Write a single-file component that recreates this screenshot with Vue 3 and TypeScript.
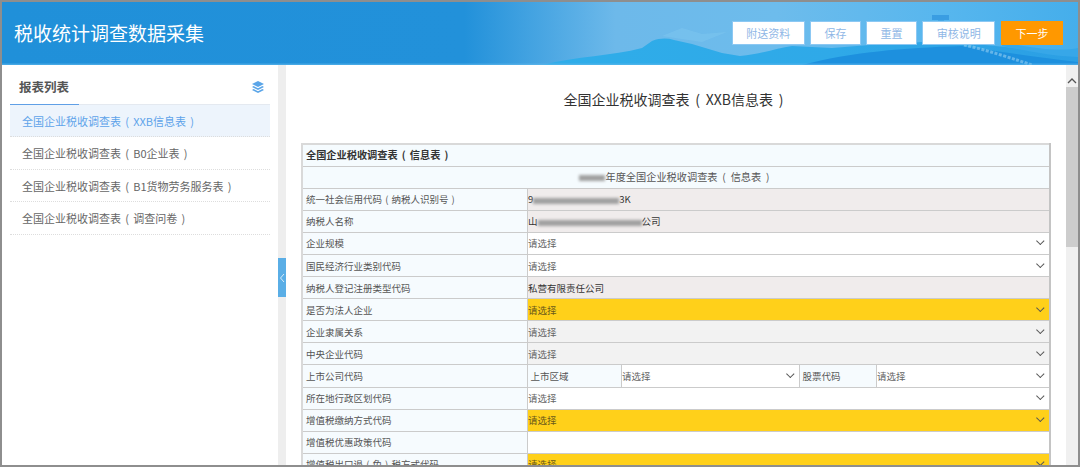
<script setup lang="ts">
interface Row { label: string; tone: string; select: boolean; text?: string; dark?: boolean; blur?: [string, number, string]; split?: boolean }

const buttons = ['附送资料', '保存', '重置', '审核说明']
const reports = ['全国企业税收调查表 ( XXB信息表 )', '全国企业税收调查表 ( B0企业表 )', '全国企业税收调查表 ( B1货物劳务服务表 )', '全国企业税收调查表 ( 调查问卷 )']
const rows: Row[] = [
  { label: '统一社会信用代码 ( 纳税人识别号 )', tone: 'ro', select: false, dark: true, blur: ['9', 86, '3K'] },
  { label: '纳税人名称', tone: 'ro', select: false, dark: true, blur: ['山', 104, '公司'] },
  { label: '企业规模', tone: 'plain', select: true, text: '请选择' },
  { label: '国民经济行业类别代码', tone: 'plain', select: true, text: '请选择' },
  { label: '纳税人登记注册类型代码', tone: 'ro', select: false, text: '私营有限责任公司', dark: true },
  { label: '是否为法人企业', tone: 'req', select: true, text: '请选择' },
  { label: '企业隶属关系', tone: 'off', select: true, text: '请选择' },
  { label: '中央企业代码', tone: 'off', select: true, text: '请选择' },
  { label: '上市公司代码', tone: 'plain', select: false, split: true },
  { label: '所在地行政区划代码', tone: 'plain', select: true, text: '请选择' },
  { label: '增值税缴纳方式代码', tone: 'req', select: true, text: '请选择' },
  { label: '增值税优惠政策代码', tone: 'plain', select: false },
  { label: '增值税出口退 ( 免 ) 税方式代码', tone: 'req', select: true, text: '请选择' }
]
</script>

<template>
  <div class="frame">
    <header class="top">
      <svg class="scene" viewBox="0 0 1076 63" preserveAspectRatio="none" aria-hidden="true">
        <defs>
          <linearGradient id="sky" x1="0" x2="1" y1="0" y2="0">
            <stop offset="0" stop-color="#2090d9" />
            <stop offset="0.43" stop-color="#2291da" />
            <stop offset="0.57" stop-color="#6db9ea" />
            <stop offset="0.72" stop-color="#6dbcec" />
            <stop offset="0.88" stop-color="#56b6ee" />
            <stop offset="1" stop-color="#45aeeb" />
          </linearGradient>
          <linearGradient id="hill" x1="0" x2="1" y1="0" y2="0">
            <stop offset="0" stop-color="#2fade9" />
            <stop offset="0.55" stop-color="#2fa9e8" />
            <stop offset="1" stop-color="#2b9fe4" />
          </linearGradient>
        </defs>
        <rect width="1076" height="63" fill="url(#sky)" />
        <path d="M540 63 C575 54 610 54 640 46 L650 39 C658 36 665 36 672 38 L690 42 L720 51 L738 54 C760 52 775 46 790 44 L830 46 L880 42 C900 40 915 42 932 38 L1076 52 L1076 63 Z" fill="url(#hill)" />
        <path d="M660 34 L680 26 L700 32 L725 30 L700 40 Z" fill="#7cc4ee" opacity="0.6" />
        <path d="M930 13 h17 v5 h-17 Z" fill="#3a9de2" />
        <path d="M936 18 h6 v10 h-6 Z" fill="#45a8e6" />
        <path d="M800 63 C850 50 900 46 960 44 C1000 50 1040 56 1076 60 L1076 63 Z" fill="#1d90de" />
        <path d="M1000 40 C1030 46 1058 50 1076 46 L1076 55 C1050 54 1030 50 1000 44 Z" fill="#37a7e8" />
        <path d="M962 43 C985 48 1015 58 1030 63" fill="none" stroke="#9ed4f2" stroke-width="3" stroke-dasharray="3 1.5" opacity="0.55" />
        <rect y="61.5" width="1076" height="1.5" fill="#5fb9ec" opacity="0.6" />
      </svg>
      <h1 class="app-title">税收统计调查数据采集</h1>
      <div class="actions">
        <button v-for="b in buttons" :key="b" class="btn" type="button">{{ b }}</button>
        <button class="btn next" type="button">下一步</button>
      </div>
    </header>

    <div class="body">
      <aside class="side">
        <div class="side-head">
          <span class="side-title">报表列表</span>
          <svg class="layers" viewBox="0 0 14 14" width="14" height="14" aria-hidden="true">
            <path d="M7 1 L13 4 L7 7 L1 4 Z" fill="#5aa5e8" />
            <path d="M2.6 6 L7 8.3 L11.4 6 L13 6.9 L7 10 L1 6.9 Z" fill="#5aa5e8" />
            <path d="M2.6 9 L7 11.3 L11.4 9 L13 9.9 L7 13 L1 9.9 Z" fill="#5aa5e8" />
          </svg>
        </div>
        <ul class="report-list">
          <li v-for="(r, i) in reports" :key="r" :class="['report', { active: i === 0 }]">{{ r }}</li>
        </ul>
      </aside>

      <div class="gutter">
        <span class="collapse">
          <svg viewBox="0 0 6 10" width="6" height="10" aria-hidden="true"><path d="M5 1 L1.5 5 L5 9" fill="none" stroke="#d8ecfa" stroke-width="1" /></svg>
        </span>
      </div>

      <main class="content">
        <h2 class="doc-title">全国企业税收调查表 ( XXB信息表 )</h2>
        <table class="sheet">
          <colgroup><col class="c-label" /><col class="c-a" /><col class="c-b" /><col class="c-c" /><col class="c-d" /></colgroup>
          <tbody>
            <tr><th colspan="5" class="sheet-name">全国企业税收调查表 ( 信息表 )</th></tr>
            <tr><td colspan="5" class="sheet-year"><span class="blur year"></span>年度全国企业税收调查表 ( 信息表 )</td></tr>
            <tr v-for="row in rows" :key="row.label">
              <td class="label">{{ row.label }}</td>
              <template v-if="row.split">
                <td class="label inner">上市区域</td>
                <td class="value plain"><span class="sel">请选择<i class="chev"></i></span></td>
                <td class="label inner">股票代码</td>
                <td class="value plain"><span class="sel">请选择<i class="chev"></i></span></td>
              </template>
              <td v-else colspan="4" :class="['value', row.tone, { dark: row.dark }]">
                <span class="sel">
                  <span v-if="row.blur">{{ row.blur[0] }}<span class="blur" :style="{ width: row.blur[1] + 'px' }"></span>{{ row.blur[2] }}</span>
                  <span v-else>{{ row.text }}</span>
                  <i v-if="row.select" class="chev"></i>
                </span>
              </td>
            </tr>
          </tbody>
        </table>
      </main>

      <div class="scrollbar">
        <svg class="arrow" viewBox="0 0 10 6" width="10" height="6" aria-hidden="true"><path d="M1 5 L5 1 L9 5" fill="none" stroke="#555" stroke-width="1.3" /></svg>
        <div class="thumb"></div>
      </div>
    </div>
  </div>
</template>

<style>
html, body { margin: 0; padding: 0; background: #fff; overflow: hidden; }
</style>

<style scoped>
.frame {
  box-sizing: border-box;
  width: 1080px;
  height: 467px;
  border: 2px solid #8e8e8e;
  display: flex;
  flex-direction: column;
  overflow: hidden;
  font-family: "Noto Sans CJK SC", "Noto Sans", sans-serif;
  word-spacing: 2.56px;
  color: #555;
  background: #fff;
}
.top {
  position: relative;
  height: 63px;
  flex: none;
  display: flex;
  align-items: center;
  justify-content: space-between;
  padding: 0 15px 0 12px;
  box-sizing: border-box;
}
.scene { position: absolute; inset: 0; width: 100%; height: 100%; }
.app-title {
  position: relative;
  margin: 0 0 2px;
  font-size: 19px;
  line-height: 24px;
  font-weight: 400;
  color: #fff;
}
.actions { position: relative; display: flex; gap: 5.7px; margin-bottom: 1px; }
.btn {
  height: 24px;
  width: 50.3px;
  padding: 0;
  border: 1px solid #8cc8f3;
  background: #fff;
  color: #8fb7e6;
  font: inherit;
  font-size: 11px;
  line-height: 22px;
  box-sizing: border-box;
  white-space: nowrap;
}
.btn:nth-child(1), .btn:nth-child(4) { width: 73px; }
.btn.next { width: 62px; border-color: #ff9800; background: #ff9800; color: #fff; }
.body { flex: 1; display: flex; min-height: 0; }
.side { width: 276px; flex: none; box-sizing: border-box; padding: 0 8px; background: #fff; }
.side-head {
  height: 40px;
  box-sizing: border-box;
  display: flex;
  align-items: center;
  justify-content: space-between;
  border-bottom: 1px solid #e4e9f0;
  position: relative;
  padding: 5px 5px 0 9px;
}
.side-head::after {
  content: "";
  position: absolute;
  left: 0;
  bottom: -1px;
  width: 69px;
  height: 1px;
  background: #5f9fe6;
}
.side-title { font-size: 12.5px; font-weight: 700; color: #555; line-height: 20px; }
.layers { display: block; }
.report-list { list-style: none; margin: 0; padding: 0; }
.report {
  height: 32.4px;
  box-sizing: border-box;
  padding-left: 12px;
  border-bottom: 1px dotted #ddd;
  font-size: 11px;
  line-height: 33px;
  word-spacing: 1.8px;
  color: #666;
  white-space: nowrap;
}
.report.active { background: #edf4fc; color: #5da3ea; }
.gutter {
  width: 8px;
  flex: none;
  background: #eeeeee;
  padding-top: 193px;
  box-sizing: border-box;
}
.collapse {
  width: 8px;
  height: 39px;
  background: #5aaee6;
  display: flex;
  align-items: center;
  justify-content: center;
}
.content { flex: 1; min-width: 0; overflow: hidden; padding: 0 15px; box-sizing: border-box; }
.doc-title {
  margin: 24px 0 34px;
  padding-right: 5px;
  height: 20px;
  font-size: 14px;
  line-height: 20px;
  font-weight: 400;
  color: #333;
  text-align: center;
}
.sheet {
  width: 750px;
  table-layout: fixed;
  border-collapse: collapse;
  border: 2px solid #d9d9d9;
  border-right: 2px solid #c4c4c4;
  font-size: 9.5px;
  word-spacing: 1px;
}
.c-label { width: 225px; }
.c-a { width: 94px; }
.c-b { width: 178px; }
.c-c { width: 77px; }
.sheet th, .sheet td {
  height: 22.1px;
  padding: 0;
  box-sizing: border-box;
  border: 1px solid #cbcbcb;
  white-space: nowrap;
  overflow: hidden;
  line-height: 20px;
}
.sheet-name { background: #f5fbfe; font-size: 10.2px; font-weight: 700; color: #333; text-align: left; padding-left: 3px !important; word-spacing: 1.8px; }
.sheet-year { background: #f5fbfe; font-size: 10.2px; text-align: center; color: #555; word-spacing: 2.56px; padding-right: 3px !important; }
.label { background: #f6fbfe; color: #555; padding-left: 3px !important; }
.label.inner { padding-left: 3px !important; }
.value { padding-left: 0.5px !important; color: #666; }
.value.plain { background: #fff; }
.value.ro { background: #f0ecec; }
.value.off { background: #f2f2f2; }
.value.req { background: #ffd01a; color: #6b5a1a; }
.value.dark { color: #333; }
.sel { display: flex; align-items: center; justify-content: space-between; padding-right: 5px; height: 20px; }
.chev {
  display: block;
  width: 5px;
  height: 5px;
  border-right: 1px solid #555;
  border-bottom: 1px solid #555;
  transform: rotate(45deg) translate(-2px, -1px);
}
.blur {
  display: inline-block;
  height: 6px;
  vertical-align: middle;
  background: #a0a0a0;
  filter: blur(1.5px);
}
.blur.year { width: 26px; }
.scrollbar {
  width: 12px;
  flex: none;
  background: #f0f0f0;
  display: flex;
  flex-direction: column;
  align-items: center;
  padding-top: 13px;
  box-sizing: border-box;
}
.arrow { display: block; margin-bottom: 3px; }
.thumb { width: 100%; height: 160px; background: #cdcdcd; }
</style>
